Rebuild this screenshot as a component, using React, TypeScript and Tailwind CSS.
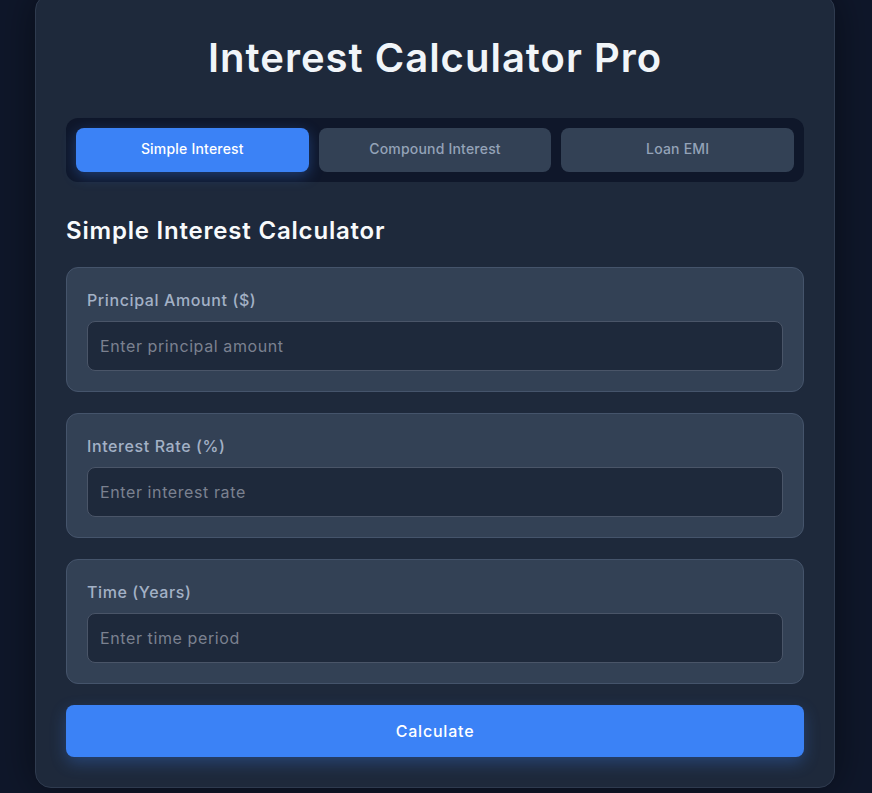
import { useState } from 'react';

const tabs = ['Simple Interest', 'Compound Interest', 'Loan EMI'];

const fields = [
  { label: 'Principal Amount ($)', placeholder: 'Enter principal amount' },
  { label: 'Interest Rate (%)', placeholder: 'Enter interest rate' },
  { label: 'Time (Years)', placeholder: 'Enter time period' },
];

function Field(props: { label: string; placeholder: string }) {
  return (
    <div className="rounded-xl border border-[#45546b] bg-[#334155] p-5">
      <label className="mb-2 block text-[16px] leading-[25px] font-medium tracking-[0.6px] text-[#a3b1c6]">
        {props.label}
      </label>
      <input
        type="text"
        placeholder={props.placeholder}
        className="h-[50px] w-full rounded-lg border border-[#4a5568] bg-[#1e293b] px-3 text-[16px] tracking-[0.6px] text-white outline-none placeholder:text-[#7b8190]"
      />
    </div>
  );
}

export default function App() {
  const [active, setActive] = useState(0);

  return (
    <div
      className="flex h-[793px] justify-center overflow-hidden bg-[#0f172a] text-white"
      style={{ fontFamily: 'Inter, "Noto Sans", sans-serif' }}
    >
      <div className="-mt-[6px] mr-[2px] h-fit w-[800px] rounded-2xl border border-[#2f3b4f] bg-[#1e293b] p-[30px] shadow-[0_0_40px_rgba(0,0,0,0.45)]">
        <h1 className="mt-[9px] mb-[36px] text-center text-[40px] leading-[48px] font-semibold tracking-[1px] text-[#f1f5f9]">
          Interest Calculator Pro
        </h1>

        <div className="flex gap-[10px] rounded-xl bg-[#0f172a] p-[10px]">
          {tabs.map((t, i) => (
            <button
              key={t}
              onClick={() => setActive(i)}
              className={
                i === active
                  ? 'h-[44px] flex-1 rounded-lg bg-[#3b82f6] pb-[3px] text-[14px] font-medium tracking-[0.2px] text-white shadow-[0_4px_14px_rgba(59,130,246,0.35)]'
                  : 'h-[44px] flex-1 rounded-lg bg-[#334155] pb-[3px] text-[14px] font-medium tracking-[0.2px] text-[#94a3b8]'
              }
            >
              {t}
            </button>
          ))}
        </div>

        <h2 className="mt-[34px] mb-[21px] text-[24px] leading-[30px] font-semibold tracking-[0.8px] text-[#f8fafc]">
          {tabs[active]} Calculator
        </h2>

        <div className="flex flex-col gap-[21px]">
          {fields.map((f) => (
            <Field key={f.label} label={f.label} placeholder={f.placeholder} />
          ))}
        </div>

        <button className="mt-[21px] h-[52px] w-full rounded-lg bg-[#3b82f6] text-[16px] font-medium tracking-[0.8px] text-white shadow-[0_6px_16px_rgba(59,130,246,0.3)]">
          Calculate
        </button>
      </div>
    </div>
  );
}
